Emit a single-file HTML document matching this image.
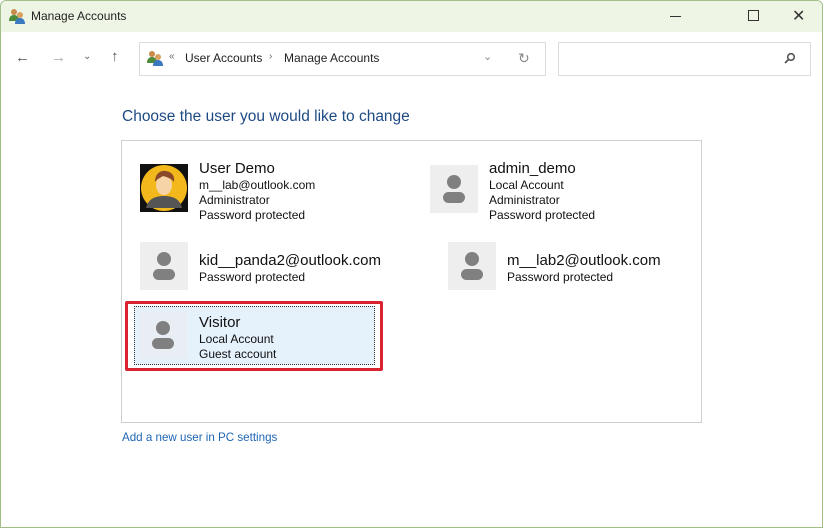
<!DOCTYPE html><html><head><style>
body{margin:0;width:823px;height:528px;overflow:hidden;font-family:"Liberation Sans",sans-serif;background:#fff;position:relative}
.a{position:absolute}
.win{position:absolute;left:0;top:0;width:823px;height:528px;box-sizing:border-box;border:1px solid #9fbf86;border-radius:6px 6px 0 0;background:#fff;overflow:hidden}
.in{position:absolute;left:0;top:0;width:823px;height:528px}
.tb{position:absolute;left:0;top:0;width:100%;height:31px;background:#eef5e5}
.av{position:absolute;width:48px;height:48px;background:#eeeeee}
.av svg{position:absolute;left:0;top:0}
.n{position:absolute;font-size:15px;color:#111;line-height:18px;white-space:nowrap}
.s{position:absolute;font-size:12px;color:#111;line-height:15px;white-space:nowrap}
</style></head><body>
<div class="win"><div class="in">
<div class="tb"></div>
<svg class="a" style="left:8px;top:7px" width="18" height="16"><circle cx="5" cy="4" r="3" fill="#c98a4a"/><path d="M0 13c0-4 2-6 5-6s5 2 5 6z" fill="#4d8a3a"/><circle cx="11" cy="7" r="3" fill="#d9a060"/><path d="M6 16c0-4 2-6 5-6s5 2 5 6z" fill="#3a78c0"/></svg>
<div class="a" style="left:30px;top:8px;font-size:12px;color:#222">Manage Accounts</div>
<div class="a" style="left:669px;top:15px;width:11px;height:1px;background:#333"></div>
<div class="a" style="left:747px;top:9px;width:9px;height:9px;border:1px solid #333"></div>
<div class="a" style="left:791px;top:5px;font-size:16px;color:#333">✕</div>
<div class="a" style="left:14px;top:48px;font-size:15px;color:#555">←</div>
<div class="a" style="left:50px;top:48px;font-size:15px;color:#aaa">→</div>
<div class="a" style="left:82px;top:50px;font-size:10px;color:#666">⌄</div>
<div class="a" style="left:110px;top:47px;font-size:15px;color:#555">↑</div>
<div class="a" style="left:138px;top:41px;width:405px;height:32px;border:1px solid #dcdcdc"></div>
<svg class="a" style="left:146px;top:49px" width="18" height="16"><circle cx="5" cy="4" r="3" fill="#c98a4a"/><path d="M0 13c0-4 2-6 5-6s5 2 5 6z" fill="#4d8a3a"/><circle cx="11" cy="7" r="3" fill="#d9a060"/><path d="M6 16c0-4 2-6 5-6s5 2 5 6z" fill="#3a78c0"/></svg>
<div class="a" style="left:168px;top:50px;font-size:10px;color:#666">«</div>
<div class="a" style="left:184px;top:50px;font-size:12px;color:#222">User Accounts</div>
<div class="a" style="left:268px;top:50px;font-size:10px;color:#666">›</div>
<div class="a" style="left:283px;top:50px;font-size:12px;color:#222">Manage Accounts</div>
<div class="a" style="left:482px;top:49px;font-size:11px;color:#888">⌄</div>
<div class="a" style="left:517px;top:49px;font-size:14px;color:#888">↻</div>
<div class="a" style="left:557px;top:41px;width:251px;height:32px;border:1px solid #dcdcdc"></div>
<svg class="a" style="left:783px;top:51px" width="12" height="12"><circle cx="7" cy="5" r="3.3" fill="none" stroke="#555" stroke-width="1.6"/><path d="M4.5 7.5L1 11" stroke="#555" stroke-width="1.8"/></svg>
<div class="a" style="left:121px;top:107px;font-size:15.5px;color:#1e4a84">Choose the user you would like to change</div>
<div class="a" style="left:120px;top:139px;width:579px;height:281px;border:1px solid #cfcfcf"></div>

<div class="av" style="left:139px;top:163px;background:#111">
<svg width="48" height="48"><circle cx="24" cy="24" r="23" fill="#f2b81c"/><path d="M6 44c2-9 9-12 18-12s16 3 18 12z" fill="#555"/><ellipse cx="24" cy="21" rx="8" ry="10" fill="#f6d4a8"/><path d="M15 18c0-9 6-12 11-11 6 1 9 5 8 11-3-4-8-5-11-6-3 2-6 3-8 6z" fill="#8a4a2a"/></svg></div>
<div class="n" style="left:198px;top:159px">User Demo</div>
<div class="s" style="left:198px;top:177px">m__lab@outlook.com</div>
<div class="s" style="left:198px;top:192px">Administrator</div>
<div class="s" style="left:198px;top:207px">Password protected</div>

<div class="av" style="left:429px;top:164px"><svg width="48" height="48"><circle cx="24" cy="17" r="7" fill="#808080"/><rect x="13" y="27" width="22" height="11" rx="5.5" fill="#808080"/></svg></div>
<div class="n" style="left:488px;top:159px">admin_demo</div>
<div class="s" style="left:488px;top:177px">Local Account</div>
<div class="s" style="left:488px;top:192px">Administrator</div>
<div class="s" style="left:488px;top:207px">Password protected</div>

<div class="av" style="left:139px;top:241px"><svg width="48" height="48"><circle cx="24" cy="17" r="7" fill="#808080"/><rect x="13" y="27" width="22" height="11" rx="5.5" fill="#808080"/></svg></div>
<div class="n" style="left:198px;top:251px">kid__panda2@outlook.com</div>
<div class="s" style="left:198px;top:269px">Password protected</div>

<div class="av" style="left:447px;top:241px"><svg width="48" height="48"><circle cx="24" cy="17" r="7" fill="#808080"/><rect x="13" y="27" width="22" height="11" rx="5.5" fill="#808080"/></svg></div>
<div class="n" style="left:506px;top:251px">m__lab2@outlook.com</div>
<div class="s" style="left:506px;top:269px">Password protected</div>

<div class="a" style="left:124px;top:300px;width:252px;height:64px;border:3px solid #d9232e;border-radius:2px"></div>
<div class="a" style="left:133px;top:305px;width:241px;height:59px;background:#e5f1fb;border:1px dotted #333;box-sizing:border-box"></div>
<div class="av" style="left:138px;top:310px;background:#e8eef3"><svg width="48" height="48"><circle cx="24" cy="17" r="7" fill="#808080"/><rect x="13" y="27" width="22" height="11" rx="5.5" fill="#808080"/></svg></div>
<div class="n" style="left:198px;top:313px">Visitor</div>
<div class="s" style="left:198px;top:331px">Local Account</div>
<div class="s" style="left:198px;top:346px">Guest account</div>

<div class="a" style="left:121px;top:430px;font-size:11.6px;color:#1e66b4">Add a new user in PC settings</div>
</div></div>
</body></html>
